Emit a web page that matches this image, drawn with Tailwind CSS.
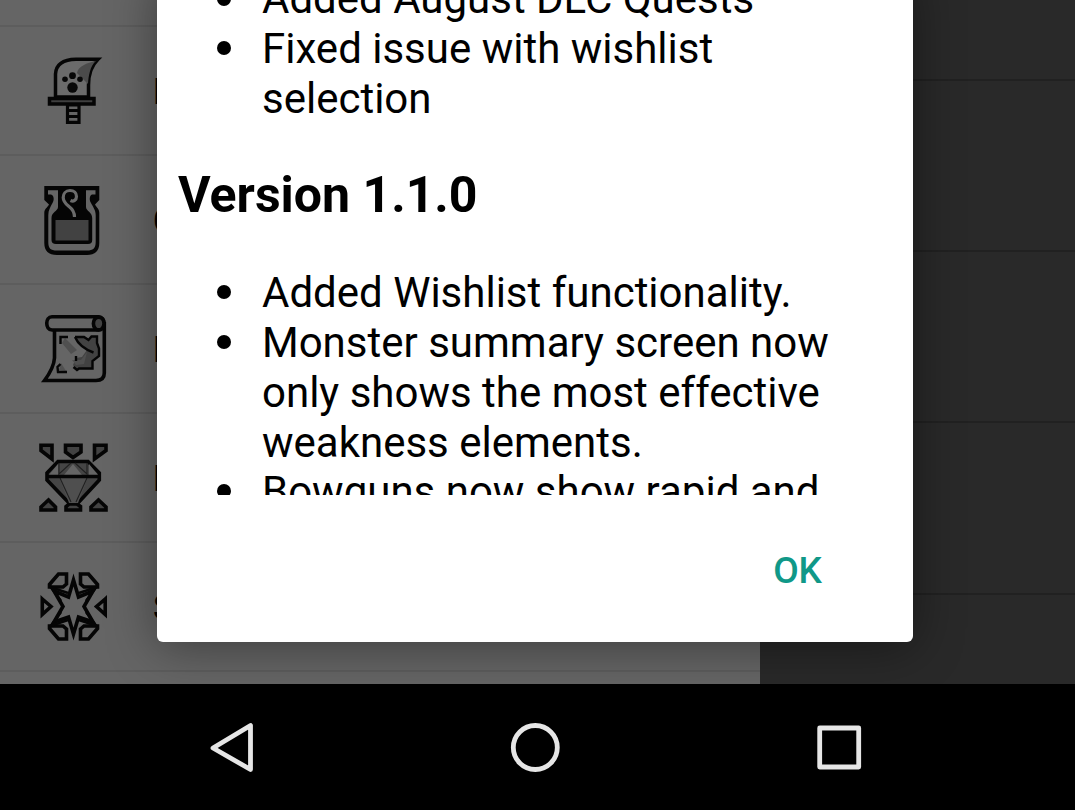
<!DOCTYPE html>
<html lang="en">
<head>
<meta charset="utf-8">
<title>Changelog</title>
<script src="https://cdn.jsdelivr.net/npm/@tailwindcss/browser@4"></script>
</head>
<body class="overflow-hidden bg-black">
<div class="relative flex h-[810px] w-[1075px] flex-col overflow-hidden bg-black font-[Roboto,sans-serif]">
  <main class="relative flex h-[684px] overflow-hidden bg-[#292929]">
    <nav class="flex w-[760px] shrink-0 flex-col bg-[#656565] text-[36px] font-medium leading-[42px] text-black">
      <div class="h-[27px] shrink-0 border-b-2 border-[#5d5d5d]"></div>
      <div class="flex h-[129px] shrink-0 items-center border-b-2 border-[#5d5d5d]">
        <svg class="h-[127px] w-[153px] shrink-0" viewBox="0 27 153 127" fill="none" stroke="#050505" stroke-width="3.5">
          <path d="M55.5 97V74C56 64 64 59.5 76 59.2H98C91 66 88.5 74 88.5 85V97Z" fill="#6b6b6b"/>
          <path d="M96 61C90 66 88.5 76 88 84L77 73C78 66 87 63 96 61Z" fill="#4b4b4b" stroke="none"/>
          <path d="M49.5 98.500H94V104H49.5Z" fill="#3f3f3f" stroke-width="3.500"/>
          <path d="M67.5 105H79V122.3H67.5ZM67 110.5H80M67 116.5H80" stroke-width="3.200"/>
          <g fill="#080808" stroke="none"><circle cx="72.5" cy="75.7" r="3.4"/><circle cx="65" cy="79.2" r="2.8"/><circle cx="80" cy="79.2" r="2.8"/><circle cx="72.5" cy="87.5" r="5.2"/></g>
        </svg>
        <span class="pt-[2px] opacity-99">Palicos</span>
      </div>
      <div class="flex h-[129px] shrink-0 items-center border-b-2 border-[#5d5d5d]">
        <svg class="h-[127px] w-[153px] shrink-0" viewBox="0 156 153 127" fill="none">
          <path d="M44.3 186H99.3V200L95 204.500C97 208 99.300 209 99.300 213V243C99.300 251 95 255 87 255H57C48.500 255 44.300 251 44.300 243V213C44.300 209 47 208 49 204.500L44.300 200Z" fill="#050505"/>
          <path d="M48 190.200H58V207C58 211 51.500 212 51.500 218V240C51.500 242.500 53 244 56 244H88C91 244 92.200 242.500 92.200 240V218C92.200 212 86 211 86 207V190.200H95.500V194.500H92C89.500 195.500 89 200 91 203C93 207 95.700 210 95.700 215V242C95.700 248.500 93 250.500 87 250.500H57C50.500 250.500 48.300 248.500 48.300 242V215C48.300 210 50.500 207 52.500 203C54.500 200 54 195.500 51 194.500H48Z" fill="#656565"/>
          <path d="M55.5 220H88.500V240.500H55.500Z" fill="#424242"/>
          <path d="M70.500 200.500C73.500 202 76.500 200 76.500 196.500C76.500 193 74 190.500 70 190.500C65.500 190.500 63.200 194 63.200 197.500C63.200 202 66 204 69 206.500C73 209.500 74.500 213 74.500 217" stroke="#6b6b6b" stroke-width="3.200"/>
        </svg>
        <span class="pt-[2px] opacity-99">Combining</span>
      </div>
      <div class="flex h-[129px] shrink-0 items-center border-b-2 border-[#5d5d5d]">
        <svg class="h-[127px] w-[153px] shrink-0" viewBox="0 285 153 127" fill="none" stroke="#050505" stroke-width="3.6">
          <path d="M54.500 330V358C54 366 50 373 44.500 380.500H96C101.500 380.500 104.300 378 104.300 373V322"/>
          <path d="M52 316.700H98.500C106 316.700 106 330 98.500 330H52C45 330 45 316.700 52 316.700Z" fill="#656565"/>
          <ellipse cx="98.700" cy="323.500" rx="5.300" ry="6.400" fill="#424242"/>
          <path d="M75 337L84 338L89 340L92 337L97 337V344L98.500 348V356L92 362V368L76 369L73 365L76 358L82 357L87 350L80 344Z" fill="#424242" stroke="none"/>
          <path d="M65 338L77 350L71 354L62 343ZM59 370L61 363L66 371ZM72 360H81L87 352L84 364L76 365Z" fill="#505050" stroke="none"/>
          <path d="M60.500 344V337H68M75 337C78 344 84 349 93.500 352.500M75 337H84L88.500 340L91.500 336.500H97V343L99 348.500V356L92.500 361V368.500H79L77 370L73.500 367M76 356V361M60.500 364L57.500 367L58 372H67" stroke-width="2.400"/>
        </svg>
        <span class="pt-[2px] opacity-99">Locations</span>
      </div>
      <div class="flex h-[129px] shrink-0 items-center border-b-2 border-[#5d5d5d]">
        <svg class="h-[127px] w-[153px] shrink-0" viewBox="0 414 153 127" fill="#424242" stroke="#050505" stroke-width="3.600">
          <path d="M41 445.200H52V459L41 450.500ZM65.500 445.200H81V452L73 457.500L65.500 452ZM94.500 445.200H106V450.500L94.500 459ZM41 510V507L48.500 500L55.500 507V510ZM91 510V507L98.500 500L106 507V510ZM66 510V506.500L69 504H77L80.500 506.500V510Z"/>
          <path d="M58 461.500H88L99.300 473V480L78 503H69L47 480V473Z" fill="#454545"/>
          <path d="M49 475L58 464V475ZM89 464L98 475H89ZM64 475L73 464L82 475Z" fill="#656565" stroke="none"/>
          <path d="M59 477H88L78 503H69Z" fill="#4f4f4f" stroke="none"/>
          <path d="M59 463V474L71 463M87 463V474L75 463M60 478L71 502M87 478L76 502" stroke-width="1.100" stroke="#202020" fill="none"/>
          <path d="M46 476.500H100"/>
        </svg>
        <span class="pt-[2px] opacity-99">Decorations</span>
      </div>
      <div class="flex h-[129px] shrink-0 items-center border-b-2 border-[#5d5d5d]">
        <svg class="h-[127px] w-[153px] shrink-0" viewBox="0 543 153 127" fill="none" stroke="#050505" stroke-width="3.600">
          <path stroke-miterlimit="10" d="M73.500 580L78.500 597L93 591L84 606.500L93 622L78.500 617L73.500 634L68.500 617L54 622L63 606.500L54 591L68.500 597Z"/>
          <path d="M66.500 574H58.500L49.500 584.500V587H63L66.500 584ZM80.500 574H88.500L97.500 584.500V587H84L80.500 584ZM66.500 639H58.500L49.500 628.500V626H63L66.500 629ZM80.500 639H88.500L97.500 628.500V626H84L80.500 629Z"/>
          <path d="M42.300 599L51 606.500L42.300 614.500ZM105.200 599L96.500 606.500L105.200 614.500Z"/>
          <path d="M50 587L68 593M97 587L79 593M50 626L68 620M97 626L79 620M50 586L61 601M97 586L86 601M50 627L61 612M97 627L86 612" stroke-width="2.600"/>
        </svg>
        <span class="pt-[2px] opacity-99">Skill Trees</span>
      </div>
    </nav>
    <div class="flex grow flex-col">
      <div class="h-[81px] border-b-2 border-[#212121]"></div>
      <div class="h-[171px] border-b-2 border-[#212121]"></div>
      <div class="h-[171px] border-b-2 border-[#212121]"></div>
      <div class="h-[172px] border-b-2 border-[#212121]"></div>
    </div>
    <section class="absolute -top-[27px] left-[157px] flex h-[669px] w-[756px] flex-col rounded-[6px] bg-white text-black shadow-[0_4px_50px_rgba(0,0,0,0.42)]">
      <div class="h-[522px] shrink-0 overflow-hidden pl-[21px] pt-px text-[42px] leading-[49.800px]">
        <ul>
          <li class="flex"><span class="flex h-[49px] w-[84px] shrink-0 items-center pl-[39px]"><i class="size-[14px] rounded-full bg-black"></i></span><span class="whitespace-nowrap">Added August DLC Quests</span></li>
          <li class="flex"><span class="flex h-[49px] w-[84px] shrink-0 items-center pl-[39px]"><i class="size-[14px] rounded-full bg-black"></i></span><span class="whitespace-nowrap">Fixed issue with wishlist<br>selection</span></li>
        </ul>
        <h2 class="mt-[43px] text-[50px] font-bold leading-[59px]">Version 1.1.0</h2>
        <ul class="mt-[43px] leading-[49.700px]">
          <li class="flex"><span class="flex h-[48px] w-[84px] shrink-0 items-center pl-[39px]"><i class="size-[14px] rounded-full bg-black"></i></span><span class="whitespace-nowrap">Added Wishlist functionality.</span></li>
          <li class="flex"><span class="flex h-[48px] w-[84px] shrink-0 items-center pl-[39px]"><i class="size-[14px] rounded-full bg-black"></i></span><span class="whitespace-nowrap">Monster summary screen now<br>only shows the most effective<br>weakness elements.</span></li>
          <li class="flex"><span class="flex h-[48px] w-[84px] shrink-0 items-center pl-[39px]"><i class="size-[14px] rounded-full bg-black"></i></span><span class="whitespace-nowrap">Bowguns now show rapid and</span></li>
        </ul>
      </div>
      <div class="flex grow items-center justify-end pr-[91px] pt-[4px]">
        <button class="text-[37px] font-medium leading-[44px] text-[#109888]">OK</button>
      </div>
    </section>
  </main>
  <footer class="flex grow items-start bg-black">
    <svg class="h-[126px] w-[1075px]" viewBox="0 684 1075 126" fill="none" stroke="#e6e6e6" stroke-width="4.800" stroke-linejoin="round">
      <path d="M213 748L250.500 725.500V769.500Z"/>
      <circle cx="535.300" cy="747.500" r="22"/>
      <rect x="819.700" y="728" width="39" height="39"/>
    </svg>
  </footer>
</div>
</body>
</html>
